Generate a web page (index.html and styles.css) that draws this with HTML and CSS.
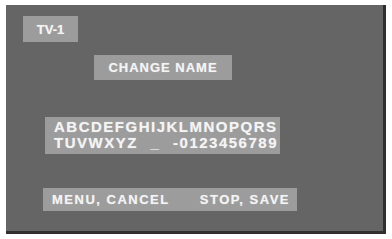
FILE: index.html
```html
<!DOCTYPE html>
<html lang="en">
<head>
    <meta charset="UTF-8">
    <title>TV-1 Change Name</title>
    <link rel="stylesheet" href="styles.css">
</head>
<body>

<div class="screen">
    <div class="label tv-label">TV-1</div>
    <div class="label title-label">CHANGE NAME</div>
    <div class="label charset">
        <div class="charset-row">ABCDEFGHIJKLMNOPQRS</div>
        <div class="charset-row">TUVWXYZ _ -0123456789</div>
    </div>
    <div class="label key-bar">
        <span>MENU, CANCEL</span>
        <span>STOP, SAVE</span>
    </div>
</div>

</body>
</html>
```

FILE: styles.css
```css
body {
    margin: 0;
    background-color: #fff;
    font-family: "Liberation Sans", Arial, sans-serif;
}
.screen {
    width: 380px;
    height: 229px;
    margin: 5px 0 0 6px;
    padding-top: 11px;
    box-sizing: border-box;
    background-color: #656565;
    border-right: 3px solid #2f2f2f;
    border-bottom: 3px solid #2f2f2f;
    display: flex;
    flex-direction: column;
    align-items: flex-start;
}
.label {
    background-color: #9c9c9c;
    color: #f4f4f4;
    font-weight: bold;
    box-sizing: border-box;
    text-shadow: 0 0 1px rgba(255, 255, 255, 0.5);
}
.tv-label {
    width: 55px;
    height: 26px;
    margin-left: 17px;
    font-size: 13px;
    display: flex;
    align-items: center;
    justify-content: center;
}
.title-label {
    width: 138px;
    height: 25px;
    margin: 13px 0 0 88px;
    font-size: 13px;
    letter-spacing: 1px;
    display: flex;
    align-items: center;
    justify-content: center;
}
.charset {
    width: 235px;
    height: 37px;
    margin: 37px 0 0 39px;
    padding: 2px 0 0 9px;
    font-size: 15px;
    line-height: 16px;
    letter-spacing: 1.5px;
}
.charset-row {
    width: 224px;
    white-space: nowrap;
    text-align: justify;
    text-align-last: justify;
}
.key-bar {
    width: 254px;
    height: 23px;
    margin: 34px 0 0 37px;
    padding: 0 7px 0 9px;
    font-size: 13px;
    letter-spacing: 1.5px;
    display: flex;
    align-items: center;
    justify-content: space-between;
}
```
